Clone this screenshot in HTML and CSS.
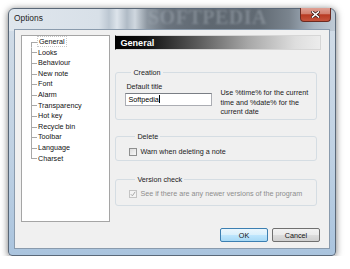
FILE: index.html
```html
<!DOCTYPE html>
<html lang="en">
<head>
    <meta charset="UTF-8">
    <title>Options</title>
    <link rel="stylesheet" href="styles.css">
</head>
<body>
    <div class="window">
        <div class="titlebar">
            <span class="title">Options</span>
            <span class="watermark">SOFTPEDIA</span>
            <button class="close" type="button" aria-label="Close">
                <svg width="9" height="7" viewBox="0 0 9 7">
                    <path d="M1.5 1 L7.5 6 M7.5 1 L1.5 6" stroke="#3a1a14" stroke-width="3" stroke-linecap="square"/>
                    <path d="M1.5 1 L7.5 6 M7.5 1 L1.5 6" stroke="#ffffff" stroke-width="1.6" stroke-linecap="square"/>
                </svg>
            </button>
        </div>

        <div class="client">
            <div class="main">
                <ul class="tree">
                    <li class="first"><span class="sel">General</span></li>
                    <li>Looks</li>
                    <li>Behaviour</li>
                    <li>New note</li>
                    <li>Font</li>
                    <li>Alarm</li>
                    <li>Transparency</li>
                    <li>Hot key</li>
                    <li>Recycle bin</li>
                    <li>Toolbar</li>
                    <li>Language</li>
                    <li class="last">Charset</li>
                </ul>

                <div class="panel">
                    <div class="panel-head">General</div>

                    <!-- Creation -->
                    <fieldset class="group creation">
                        <legend>Creation</legend>
                        <div class="creation-body">
                            <div class="field">
                                <label for="title">Default title</label>
                                <div class="textbox" id="title">Softpedia<span class="caret"></span></div>
                            </div>
                            <p class="hint">Use %time% for the current time and %date% for the current date</p>
                        </div>
                    </fieldset>

                    <!-- Delete -->
                    <fieldset class="group delete">
                        <legend>Delete</legend>
                        <div class="check">
                            <span class="box"></span>
                            <span>Warn when deleting a note</span>
                        </div>
                    </fieldset>

                    <!-- Version check -->
                    <fieldset class="group version">
                        <legend>Version check</legend>
                        <div class="check disabled">
                            <span class="box">
                                <svg width="6" height="6" viewBox="0 0 6 6">
                                    <path d="M0.8 3.2 L2.4 4.8 L5.2 0.8" fill="none" stroke="#a8a8a8" stroke-width="1"/>
                                </svg>
                            </span>
                            <span>See if there are any newer versions of the program</span>
                        </div>
                    </fieldset>
                </div>
            </div>

            <div class="buttons">
                <button class="btn default" type="button">OK</button>
                <button class="btn" type="button">Cancel</button>
            </div>
        </div>
    </div>
</body>
</html>
```

FILE: styles.css
```css
* {
    margin: 0;
    padding: 0;
    box-sizing: border-box;
    font-family: "Liberation Sans", Arial, sans-serif;
}

body {
    background-color: #ffffff;
}

/* Janela */
.window {
    margin: 8px 0 0 8px;
    width: 328px;
    height: 248px;
    padding: 0 5px 6px 5px;
    display: flex;
    flex-direction: column;
    border: 1px solid #5a6878;
    border-radius: 6px 6px 4px 4px;
    background:
        linear-gradient(90deg, #dfe6ed 0, #d8e0e8 90px, #bcc7d2 100px, #dde4eb 108px, #b0bbc6 118px, #cfd7df 126px, #8d97a1 138px, #6a737d 158px, #5e6770 200px, #616a73 250px, #7a848e 280px, #a9b6c3 305px, #c1ccd7 328px) top / 100% 22px no-repeat,
        linear-gradient(180deg, #d3dde7 0, #bfd1e3 60%, #aac4de 100%);
    box-shadow: 0 1px 7px rgba(0, 0, 0, 0.55);
}

.titlebar {
    height: 20px;
    display: flex;
    align-items: flex-start;
    position: relative;
}

.title {
    padding-top: 4px;
    font-size: 8.4px;
    line-height: 10px;
    color: #1e1e1e;
}

.watermark {
    position: absolute;
    left: 134px;
    top: -2px;
    font-family: "Liberation Serif", serif;
    font-weight: bold;
    font-size: 20px;
    line-height: 20px;
    letter-spacing: 0.5px;
    color: rgba(165, 173, 181, 0.45);
    filter: blur(1px);
}

.close {
    margin-left: auto;
    margin-right: -1px;
    margin-top: -1px;
    width: 31px;
    height: 14px;
    display: flex;
    align-items: center;
    justify-content: center;
    border: 1px solid #6d2a20;
    border-top: none;
    border-radius: 0 0 4px 4px;
    background: linear-gradient(180deg, #e0a195 0, #d2806f 45%, #b83a22 52%, #c5543c 100%);
    position: relative;
}

/* Area do cliente */
.client {
    flex: 1;
    background-color: #f0f0f0;
    border: 1px solid #8a9bad;
    padding: 5px 8px 0 6px;
    display: flex;
    flex-direction: column;
}

.main {
    display: flex;
    height: 187px;
}

/* Arvore */
.tree {
    width: 90px;
    height: 187px;
    background: #ffffff;
    border: 1px solid #a5a5a5;
    list-style: none;
    padding-top: 1px;
}

.tree li {
    height: 10.6px;
    line-height: 10.6px;
    font-size: 7.2px;
    color: #111;
    padding-left: 16px;
    background:
        linear-gradient(#a8a8a8, #a8a8a8) no-repeat 9px 0 / 1px 100%,
        linear-gradient(#a8a8a8, #a8a8a8) no-repeat 9px 50% / 6px 1px;
}

.tree li.first {
    background:
        linear-gradient(#a8a8a8, #a8a8a8) no-repeat 9px 100% / 1px 50%,
        linear-gradient(#a8a8a8, #a8a8a8) no-repeat 9px 50% / 6px 1px;
}

.tree li.last {
    background:
        linear-gradient(#a8a8a8, #a8a8a8) no-repeat 9px 0 / 1px 50%,
        linear-gradient(#a8a8a8, #a8a8a8) no-repeat 9px 50% / 6px 1px;
}

.tree .sel {
    padding: 0 1px;
    outline: 1px dotted #c8c8c8;
}

/* Painel */
.panel {
    margin-left: 5px;
    width: 207px;
    display: flex;
    flex-direction: column;
}

.panel-head {
    height: 15px;
    line-height: 14px;
    padding-left: 4px;
    font-size: 9.1px;
    font-weight: bold;
    color: #ffffff;
    border: 1px solid #d6d6d6;
    border-left-color: #000;
    background: linear-gradient(90deg, #000000 0, #111111 15%, #5a5a5a 40%, #a8a8a8 65%, #dedede 88%, #ececec 100%);
}

.group {
    margin-right: 4px;
    border: 1px solid #d5dde3;
    border-radius: 3px;
    min-width: 0;
    font-size: 7.2px;
    color: #1a1a1a;
}

.group legend {
    margin-left: 6px;
    padding: 0 2px;
    line-height: 9px;
}

.creation {
    margin-top: 18px;
    padding: 0 0 2px 9px;
}

.creation-body {
    display: flex;
    align-items: flex-start;
    padding-top: 5px;
}

.field label {
    display: block;
    padding-left: 1px;
    line-height: 9px;
}

.textbox {
    margin-top: 2px;
    width: 87px;
    height: 13px;
    line-height: 11px;
    padding-left: 2px;
    background: #ffffff;
    border: 1px solid #abadb3;
    border-top-color: #7a7e85;
    font-size: 7.2px;
    color: #000;
}

.caret {
    display: inline-block;
    width: 1px;
    height: 8px;
    background: #000;
    vertical-align: -1px;
}

.hint {
    margin: 6px 0 0 8px;
    width: 92px;
    line-height: 9.5px;
    font-size: 7.2px;
}

.delete {
    margin-top: 12px;
    padding: 6px 0 3px 13px;
}

.version {
    margin-top: 14px;
    padding: 5px 0 6px 13px;
}

.check {
    display: flex;
    align-items: center;
    height: 10px;
    gap: 3px;
}

.check .box {
    width: 8px;
    height: 8px;
    display: flex;
    align-items: center;
    justify-content: center;
    border: 1px solid #8e8f8f;
    background: linear-gradient(135deg, #dcdcdc, #f8f8f8);
}

.check.disabled {
    color: #8d8d8d;
}

.check.disabled .box {
    border-color: #c4c4c4;
    background: #f4f4f4;
}

/* Botoes */
.buttons {
    display: flex;
    justify-content: flex-end;
    gap: 4px;
    margin: 6px 1px 0 0;
}

.btn {
    width: 48px;
    height: 14px;
    font-size: 7.2px;
    color: #111;
    border: 1px solid #707070;
    border-radius: 2px;
    background: linear-gradient(180deg, #f2f2f2 0, #ebebeb 48%, #dddddd 52%, #cfcfcf 100%);
}

.btn.default {
    border-color: #3c7fb1;
    background: linear-gradient(180deg, #eaf6fd 0, #d9f0fc 48%, #bee6fd 52%, #a7d9f5 100%);
}
```
